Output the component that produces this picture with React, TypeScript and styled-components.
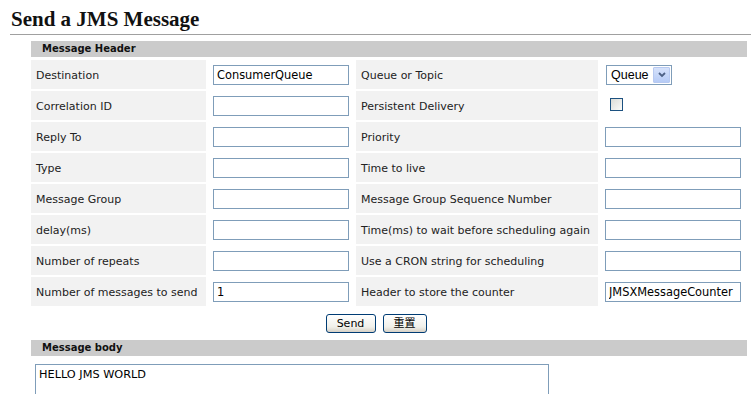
import React from "react";
import styled, { createGlobalStyle } from "styled-components";

const Global = createGlobalStyle`
  html, body { margin: 0; padding: 0; background: #fff; }
  body { font-family: "DejaVu Sans", Verdana, sans-serif; color: #222; }
`;

const Page = styled.div`
  width: 751px;
  height: 394px;
  overflow: hidden;
  padding-top: 7px;
  box-sizing: border-box;
`;

const Title = styled.h1`
  margin: 0 0 0 10px;
  padding: 0 0 3px 1px;
  font-family: "Liberation Serif", "Times New Roman", serif;
  font-weight: bold;
  font-size: 21px;
  line-height: 24px;
  color: #111;
  border-bottom: 1px solid #a0a0a0;
`;

const Grid = styled.div`
  margin: 4px 0 0 29px;
  width: 720px;
  box-sizing: border-box;
  padding: 2px;
  display: grid;
  grid-template-columns: 175px 146px 242px 147px;
  grid-template-rows: 17px repeat(8, 29px);
  gap: 2px;
`;

const SectionBar = styled.div`
  height: 16px;
  background: #cbcbcb;
  font-weight: bold;
  font-size: 10px;
  line-height: 16px;
  padding-left: 11px;
  color: #111;
`;

const HeaderBar = styled(SectionBar)`
  grid-column: 1 / -1;
`;

const Label = styled.div`
  background: #f2f2f2;
  font-size: 11px;
  display: flex;
  align-items: center;
  padding-left: 5px;
  padding-top: 1px;
  color: #222;
`;

const Field = styled.div`
  display: flex;
  align-items: center;
  padding-left: 5px;
`;

const TextInput = styled.input`
  box-sizing: border-box;
  width: 136px;
  height: 20px;
  border: 1px solid #7f9db9;
  padding: 0 3px;
  font-family: "DejaVu Sans", Verdana, sans-serif;
  font-size: 11.4px;
  color: #000;
  outline: none;
`;

const SelectBox = styled.div`
  box-sizing: border-box;
  margin-left: 1px;
  height: 20px;
  width: 66px;
  border: 1px solid #7f9db9;
  display: flex;
  align-items: center;
  padding: 1px;
  background: #fff;
`;

const SelectText = styled.span`
  flex: 1;
  font-family: "Liberation Sans", Arial, sans-serif;
  font-size: 12.5px;
  padding-left: 3px;
  color: #000;
`;

const SelectArrow = styled.span`
  width: 17px;
  height: 16px;
  box-sizing: border-box;
  border: 1px solid #b7c9f1;
  border-radius: 1px;
  background: linear-gradient(#d6e2fb, #b6cbf6);
  display: flex;
  align-items: center;
  justify-content: center;
`;

const Check = styled.span`
  margin-left: 5px;
  margin-top: -2px;
  width: 13px;
  height: 13px;
  box-sizing: border-box;
  border: 1px solid #1c5180;
  background: linear-gradient(135deg, #dcdcd7, #fbfbf9);
`;

const Buttons = styled.div`
  display: flex;
  justify-content: center;
  gap: 7px;
  padding-left: 1px;
  margin-top: 6px;
`;

const Button = styled.button<{ $w: number }>`
  width: ${(p) => p.$w}px;
  height: 19px;
  box-sizing: border-box;
  border: 1px solid #003c74;
  border-radius: 3px;
  background: linear-gradient(#ffffff, #f0f0ea 70%, #d6d0c5);
  font-family: "DejaVu Sans", Verdana, "Noto Sans CJK SC", sans-serif;
  font-size: 11px;
  color: #000;
  padding: 0;
  line-height: 16px;
`;

const BodySection = styled.div`
  margin: 7px 0 0 31px;
  width: 716px;
`;

const TextArea = styled.textarea`
  display: block;
  margin: 8px 0 0 4px;
  box-sizing: border-box;
  width: 514px;
  height: 80px;
  border: 1px solid #7f9db9;
  padding: 3px 3px;
  font-family: "DejaVu Sans", Verdana, sans-serif;
  font-size: 11.3px;
  line-height: 14px;
  color: #000;
  resize: none;
  outline: none;
`;

type Cell = { label: string; value?: string; kind?: "select" | "check" };

const rows: [Cell, Cell][] = [
  [{ label: "Destination", value: "ConsumerQueue" }, { label: "Queue or Topic", kind: "select" }],
  [{ label: "Correlation ID" }, { label: "Persistent Delivery", kind: "check" }],
  [{ label: "Reply To" }, { label: "Priority" }],
  [{ label: "Type" }, { label: "Time to live" }],
  [{ label: "Message Group" }, { label: "Message Group Sequence Number" }],
  [{ label: "delay(ms)" }, { label: "Time(ms) to wait before scheduling again" }],
  [{ label: "Number of repeats" }, { label: "Use a CRON string for scheduling" }],
  [{ label: "Number of messages to send", value: "1" }, { label: "Header to store the counter", value: "JMSXMessageCounter" }],
];

function renderField(c: Cell) {
  if (c.kind === "select") {
    return (
      <SelectBox>
        <SelectText>Queue</SelectText>
        <SelectArrow>
          <svg width="8" height="6" viewBox="0 0 8 6">
            <path d="M1 1 L4 4 L7 1" fill="none" stroke="#4d6185" strokeWidth="1.8" />
          </svg>
        </SelectArrow>
      </SelectBox>
    );
  }
  if (c.kind === "check") return <Check />;
  return <TextInput defaultValue={c.value ?? ""} />;
}

export default function App() {
  return (
    <Page>
      <Global />
      <Title>Send a JMS Message</Title>
      <Grid>
        <HeaderBar>Message Header</HeaderBar>
        {rows.map(([a, b]) => (
          <React.Fragment key={a.label}>
            <Label>{a.label}</Label>
            <Field>{renderField(a)}</Field>
            <Label>{b.label}</Label>
            <Field>{renderField(b)}</Field>
          </React.Fragment>
        ))}
      </Grid>
      <Buttons>
        <Button $w={50}>Send</Button>
        <Button $w={44}>重置</Button>
      </Buttons>
      <BodySection>
        <SectionBar>Message body</SectionBar>
        <TextArea defaultValue="HELLO JMS WORLD" />
      </BodySection>
    </Page>
  );
}
